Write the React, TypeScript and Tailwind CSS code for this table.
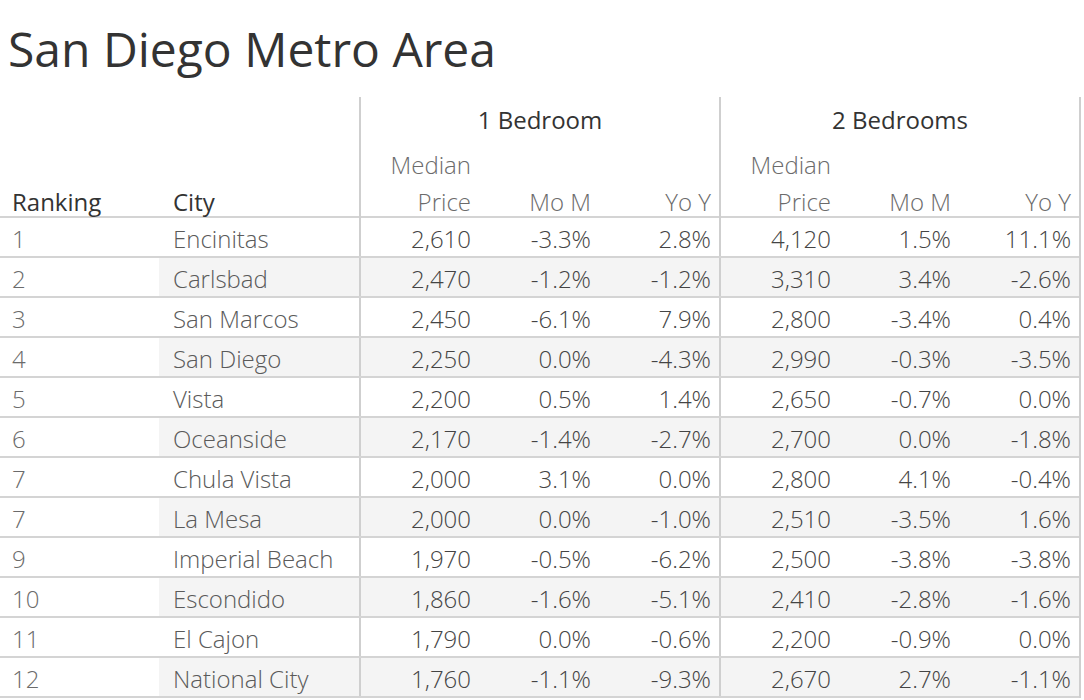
import React from "react";

const rows: string[][] = [
  ["1", "Encinitas", "2,610", "-3.3%", "2.8%", "4,120", "1.5%", "11.1%"],
  ["2", "Carlsbad", "2,470", "-1.2%", "-1.2%", "3,310", "3.4%", "-2.6%"],
  ["3", "San Marcos", "2,450", "-6.1%", "7.9%", "2,800", "-3.4%", "0.4%"],
  ["4", "San Diego", "2,250", "0.0%", "-4.3%", "2,990", "-0.3%", "-3.5%"],
  ["5", "Vista", "2,200", "0.5%", "1.4%", "2,650", "-0.7%", "0.0%"],
  ["6", "Oceanside", "2,170", "-1.4%", "-2.7%", "2,700", "0.0%", "-1.8%"],
  ["7", "Chula Vista", "2,000", "3.1%", "0.0%", "2,800", "4.1%", "-0.4%"],
  ["7", "La Mesa", "2,000", "0.0%", "-1.0%", "2,510", "-3.5%", "1.6%"],
  ["9", "Imperial Beach", "1,970", "-0.5%", "-6.2%", "2,500", "-3.8%", "-3.8%"],
  ["10", "Escondido", "1,860", "-1.6%", "-5.1%", "2,410", "-2.8%", "-1.6%"],
  ["11", "El Cajon", "1,790", "0.0%", "-0.6%", "2,200", "-0.9%", "0.0%"],
  ["12", "National City", "1,760", "-1.1%", "-9.3%", "2,670", "2.7%", "-1.1%"],
];

function Group({ label }: { label: string }) {
  return (
    <div className="flex w-[360px] flex-col border-l-2 border-[#cfcfcf]">
      <div className="flex h-[46px] items-center justify-center text-[24px] font-normal text-[#333]">
        {label}
      </div>
      <div className="flex flex-1 border-b-2 border-[#d4d4d4] text-[24px] font-light text-[#6b6b6b]">
        <div className="flex w-[118px] flex-col items-end justify-end gap-[9px] pr-[8px] leading-[28px]">
          <span>Median</span>
          <span>Price</span>
        </div>
        <div className="flex w-[120px] items-end justify-end pr-[8px] leading-[28px]">Mo M</div>
        <div className="flex w-[120px] items-end justify-end pr-[8px] leading-[28px]">Yo Y</div>
      </div>
    </div>
  );
}

export default function App() {
  return (
    <div
      className="h-[700px] w-[1084px] overflow-hidden bg-white"
      style={{ fontFamily: '"Open Sans", "Noto Sans", sans-serif' }}
    >
      <div className="h-[97px] pl-[8px] pt-[19px] text-[48px] leading-[60px] text-[#333]">
        San Diego Metro Area
      </div>
      <div className="flex h-[121px] w-[1081px] border-r-2 border-[#cfcfcf]">
        <div className="flex w-[359px] items-end border-b-2 border-[#d4d4d4] text-[24px] leading-[28px] text-[#333]">
          <div className="w-[159px] pl-[12px]">Ranking</div>
          <div className="w-[200px] pl-[14px]">City</div>
        </div>
        <Group label="1 Bedroom" />
        <Group label="2 Bedrooms" />
      </div>
      <div className="w-[1081px] border-r-2 border-[#cfcfcf] text-[24px] font-light">
        {rows.map((r, i) => {
          const shade = i % 2 === 1 ? "bg-[#f4f4f4]" : "bg-white";
          return (
            <div key={i} className="flex h-[40px] border-b-2 border-[#d4d4d4] leading-[30px]">
              <div className="flex w-[159px] items-center bg-white pl-[12px] pt-[4px] text-[#6b6b6b]">{r[0]}</div>
              <div className={`flex w-[200px] items-center pl-[14px] pt-[4px] text-[#5a5a5a] ${shade}`}>{r[1]}</div>
              {r.slice(2).map((v, j) => (
                <div
                  key={j}
                  className={`flex w-[120px] items-center justify-end pr-[8px] pt-[4px] text-[#444] ${shade} ${
                    j === 0 || j === 3 ? "border-l-2 border-[#cfcfcf]" : ""
                  }`}
                >
                  {v}
                </div>
              ))}
            </div>
          );
        })}
      </div>
    </div>
  );
}
